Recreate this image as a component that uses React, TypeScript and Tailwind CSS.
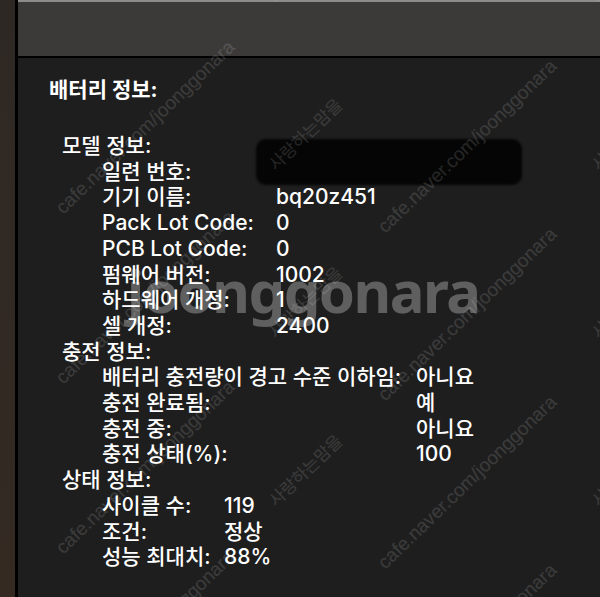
import React from "react";

type Row = { label: string; value: string };
type Section = { title: string; labelWidth: string; rows: Row[] };

const SECTIONS: Section[] = [
  {
    title: "모델 정보:",
    labelWidth: "grid-cols-[174px_1fr]",
    rows: [
      { label: "일련 번호:", value: "" },
      { label: "기기 이름:", value: "bq20z451" },
      { label: "Pack Lot Code:", value: "0" },
      { label: "PCB Lot Code:", value: "0" },
      { label: "펌웨어 버전:", value: "1002" },
      { label: "하드웨어 개정:", value: "1" },
      { label: "셀 개정:", value: "2400" },
    ],
  },
  {
    title: "충전 정보:",
    labelWidth: "grid-cols-[314px_1fr]",
    rows: [
      { label: "배터리 충전량이 경고 수준 이하임:", value: "아니요" },
      { label: "충전 완료됨:", value: "예" },
      { label: "충전 중:", value: "아니요" },
      { label: "충전 상태(%):", value: "100" },
    ],
  },
  {
    title: "상태 정보:",
    labelWidth: "grid-cols-[122px_1fr]",
    rows: [
      { label: "사이클 수:", value: "119" },
      { label: "조건:", value: "정상" },
      { label: "성능 최대치:", value: "88%" },
    ],
  },
];

// tiled watermark of the screenshot source, laid over the content
function Watermarks() {
  const cafe: { x: number; y: number }[] = [];
  const love: { x: number; y: number }[] = [];
  for (let k = 0; k < 4; k++) {
    cafe.push({ x: 145, y: 127 + 170 * k });
    cafe.push({ x: 467, y: 146 + 168 * k });
  }
  for (let k = -1; k < 4; k++) {
    love.push({ x: 306, y: 135 + 168 * k });
    love.push({ x: 629, y: 135 + 168 * k });
  }
  return (
    <div className="pointer-events-none absolute inset-0 overflow-hidden font-['Liberation_Sans','Noto_Sans_CJK_KR',sans-serif]">
      {cafe.map((p, i) => (
        <span
          key={"c" + i}
          className="absolute -translate-x-1/2 -translate-y-1/2 rotate-[-44deg] whitespace-nowrap text-[19px] leading-none text-white/[0.13]"
          style={{ left: p.x, top: p.y }}
        >
          cafe.naver.com/joonggonara
        </span>
      ))}
      {love.map((p, i) => (
        <span
          key={"l" + i}
          className="absolute -translate-x-1/2 -translate-y-1/2 rotate-[-44deg] whitespace-nowrap text-[17px] leading-none text-white/[0.13]"
          style={{ left: p.x, top: p.y }}
        >
          사랑하는맘을
        </span>
      ))}
      <span className="absolute left-[127px] top-[262px] whitespace-nowrap text-[58px] font-bold leading-none tracking-[-1.5px] text-white/[0.29] font-['Noto_Sans',sans-serif]">
        joonggonara
      </span>
    </div>
  );
}

export default function App() {
  return (
    <div className="relative flex h-[597px] w-[600px] overflow-hidden bg-[#1e1e1e]">
      <div className="w-[15px] shrink-0 bg-gradient-to-b from-[#2e2824] to-[#342a22]" />
      <div className="w-[3px] shrink-0 bg-black" />
      <div className="flex flex-1 flex-col">
        <div className="h-[56px] shrink-0 border-t-2 border-[#8c8c8c] bg-[#3b3a39]" />
        <div className="h-[2px] shrink-0 bg-black" />
        <main className="flex-1 bg-[#1e1e1e] pl-[31px] pt-[19px] text-[21px] font-medium leading-[25.7px] text-white font-[Inter,'Noto_Sans_CJK_KR',sans-serif]">
          <h1 className="text-[21px] font-bold leading-[26px]">배터리 정보:</h1>
          <div className="mt-[30px] flex flex-col">
            {SECTIONS.map((s) => (
              <section key={s.title} className="flex flex-col">
                <div className="ml-[13px]">{s.title}</div>
                {s.rows.map((r) => (
                  <div key={r.label} className={"ml-[53px] grid " + s.labelWidth}>
                    <span className="whitespace-nowrap">{r.label}</span>
                    <span className="whitespace-nowrap">{r.value}</span>
                  </div>
                ))}
              </section>
            ))}
          </div>
        </main>
      </div>
      <div className="absolute left-[256px] top-[139px] h-[46px] w-[266px] rounded-[10px] bg-[#050505] blur-[1px]" />
      <Watermarks />
    </div>
  );
}
